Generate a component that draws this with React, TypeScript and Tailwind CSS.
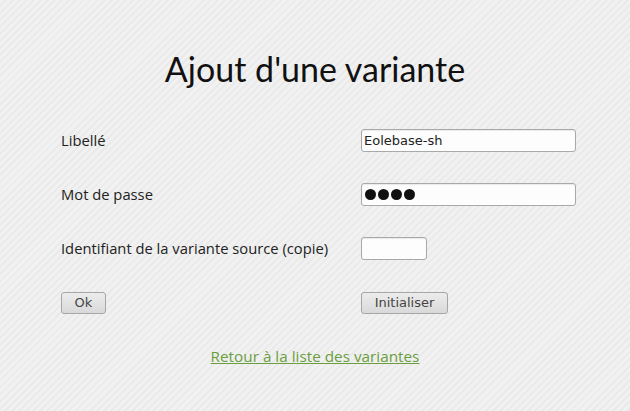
import { useState } from "react";

export default function App() {
  const [libelle, setLibelle] = useState("Eolebase-sh");
  const [source, setSource] = useState("");

  const inputClass =
    "h-[23px] rounded-[3px] border border-[#a9a9a9] bg-[#fdfdfd] px-[2px] text-[13px] text-[#222] shadow-[inset_0_1px_1px_rgba(0,0,0,0.08)] outline-none font-['DejaVu_Sans',sans-serif]";
  const buttonClass =
    "h-[22px] rounded-[3px] border border-[#a6a6a6] bg-[linear-gradient(#ececec,#d9d9d9)] text-[13px] leading-none text-[#444] font-['DejaVu_Sans',sans-serif]";

  return (
    <div className="h-[411px] w-full bg-[repeating-linear-gradient(135deg,#f1f1f1_0px,#f1f1f1_3px,#eaeaea_3px,#eaeaea_5px)] font-['Open_Sans',sans-serif] text-[#222]">
      <h1 className="pt-[52px] text-center font-['Lato',sans-serif] text-[34px] leading-none text-[#111]">
        Ajout d'une variante
      </h1>

      <form className="mt-[27px] flex flex-col pl-[61px] pr-[54px] text-[14.75px]">
        {/* Champs */}
        <div className="grid h-[54px] grid-cols-[300px_1fr] items-center">
          <label>Libellé</label>
          <input
            className={inputClass + " w-[215px]"}
            value={libelle}
            onChange={(e) => setLibelle(e.target.value)}
          />
        </div>
        <div className="grid h-[54px] grid-cols-[300px_1fr] items-center">
          <label>Mot de passe</label>
          <div className={inputClass + " flex w-[215px] items-center gap-[2px] px-[3px]"}>
            {[0, 1, 2, 3].map((i) => (
              <span key={i} className="h-[11px] w-[11px] rounded-full bg-[#111]" />
            ))}
          </div>
        </div>
        <div className="grid h-[54px] grid-cols-[300px_1fr] items-center">
          <label>Identifiant de la variante source (copie)</label>
          <input
            className={inputClass + " w-[66px]"}
            value={source}
            onChange={(e) => setSource(e.target.value)}
          />
        </div>

        {/* Boutons */}
        <div className="grid h-[54px] grid-cols-[300px_1fr] items-center">
          <div>
            <button type="button" className={buttonClass + " w-[45px]"}>
              Ok
            </button>
          </div>
          <div>
            <button type="reset" className={buttonClass + " w-[87px]"}>
              Initialiser
            </button>
          </div>
        </div>
      </form>

      <div className="mt-[15px] text-center">
        <a href="#" className="text-[15.3px] text-[#6a9e3e] underline">
          Retour à la liste des variantes
        </a>
      </div>
    </div>
  );
}
